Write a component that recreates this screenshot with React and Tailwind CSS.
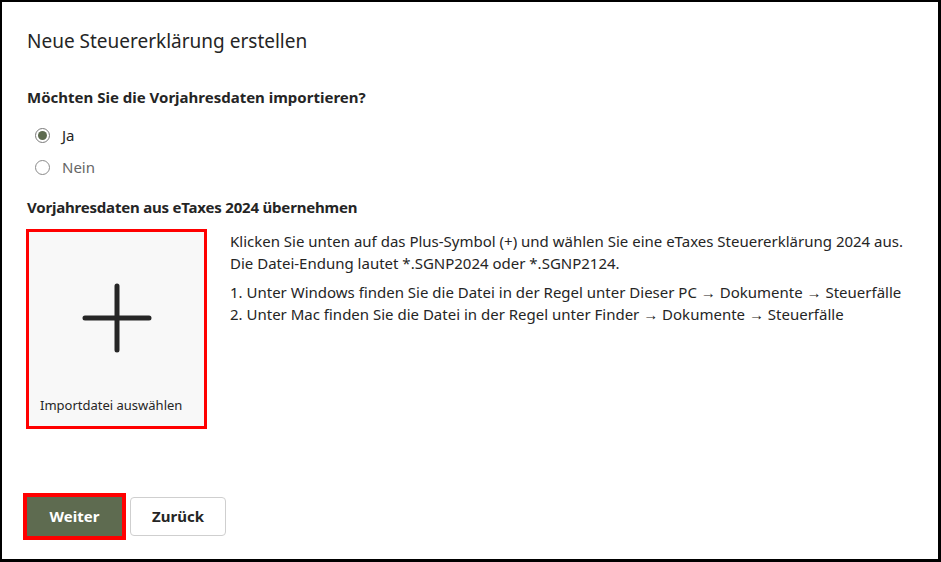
import { useState } from "react";

const Radio = ({ checked, label, onClick }) => {
  return (
    <div className="flex items-center h-[32px] cursor-pointer" onClick={onClick}>
      <span
        className={`ml-[8px] flex items-center justify-center w-[15px] h-[15px] rounded-full border ${
          checked ? "border-[#7a7a7a]" : "border-[#8a8a8a]"
        }`}
      >
        {checked && <span className="w-[9px] h-[9px] rounded-full bg-[#5e6b50]" />}
      </span>
      <span className={`ml-[12px] text-[15px] ${checked ? "text-[#252525]" : "text-[#666666]"}`}>
        {label}
      </span>
    </div>
  );
};

const App = () => {
  const [importPrev, setImportPrev] = useState(true);

  return (
    <div
      className="w-[941px] h-[562px] bg-white border-t-2 border-l-2 border-r-[3px] border-b-[3px] border-black flex flex-col pl-[25px] text-[#252525]"
      style={{ fontFamily: '"Noto Sans", "Open Sans", sans-serif' }}
    >
      <h1 className="pt-[25px] text-[19px] leading-[28px]">Neue Steuererklärung erstellen</h1>

      <h2 className="mt-[31px] text-[15px] leading-[22px] font-bold">
        Möchten Sie die Vorjahresdaten importieren?
      </h2>

      <div className="mt-[11px] flex flex-col">
        <Radio checked={importPrev} label="Ja" onClick={() => setImportPrev(true)} />
        <Radio checked={!importPrev} label="Nein" onClick={() => setImportPrev(false)} />
      </div>

      <h2 className="mt-[13px] text-[15px] leading-[22px] font-bold tracking-[-0.2px]">
        Vorjahresdaten aus eTaxes 2024 übernehmen
      </h2>

      <div className="mt-[11px] flex items-start">
        <button className="-ml-[1px] w-[181px] h-[200px] border-[3px] border-[#ff0000] bg-[#f8f8f8] flex flex-col items-center">
          <svg width="72" height="72" viewBox="0 0 72 72" className="mt-[50px]">
            <path
              d="M36 4 V68 M4 36 H68"
              stroke="#262626"
              strokeWidth="5"
              strokeLinecap="round"
              fill="none"
            />
          </svg>
          <span className="mt-[42px] self-start pl-[11px] text-[13px] leading-[18px] text-[#262626]">
            Importdatei auswählen
          </span>
        </button>

        <div className="ml-[23px] mt-[1px] text-[15px] leading-[22px]">
          <p>Klicken Sie unten auf das Plus-Symbol (+) und wählen Sie eine eTaxes Steuererklärung 2024 aus.</p>
          <p>Die Datei-Endung lautet *.SGNP2024 oder *.SGNP2124.</p>
          <ol className="mt-[7px]">
            <li>1. Unter Windows finden Sie die Datei in der Regel unter Dieser PC → Dokumente → Steuerfälle</li>
            <li>2. Unter Mac finden Sie die Datei in der Regel unter Finder → Dokumente → Steuerfälle</li>
          </ol>
        </div>
      </div>

      <div className="mt-auto pb-[23px] flex gap-[8px]">
        <button className="w-[95px] h-[39px] bg-[#5e6b50] text-white font-bold text-[15px] rounded-none outline-4 outline-[#ff0000]">
          Weiter
        </button>
        <button className="w-[96px] h-[39px] bg-white border border-[#cfcfcf] rounded-[4px] text-[#252525] font-bold text-[15px]">
          Zurück
        </button>
      </div>
    </div>
  );
};

export default App;
